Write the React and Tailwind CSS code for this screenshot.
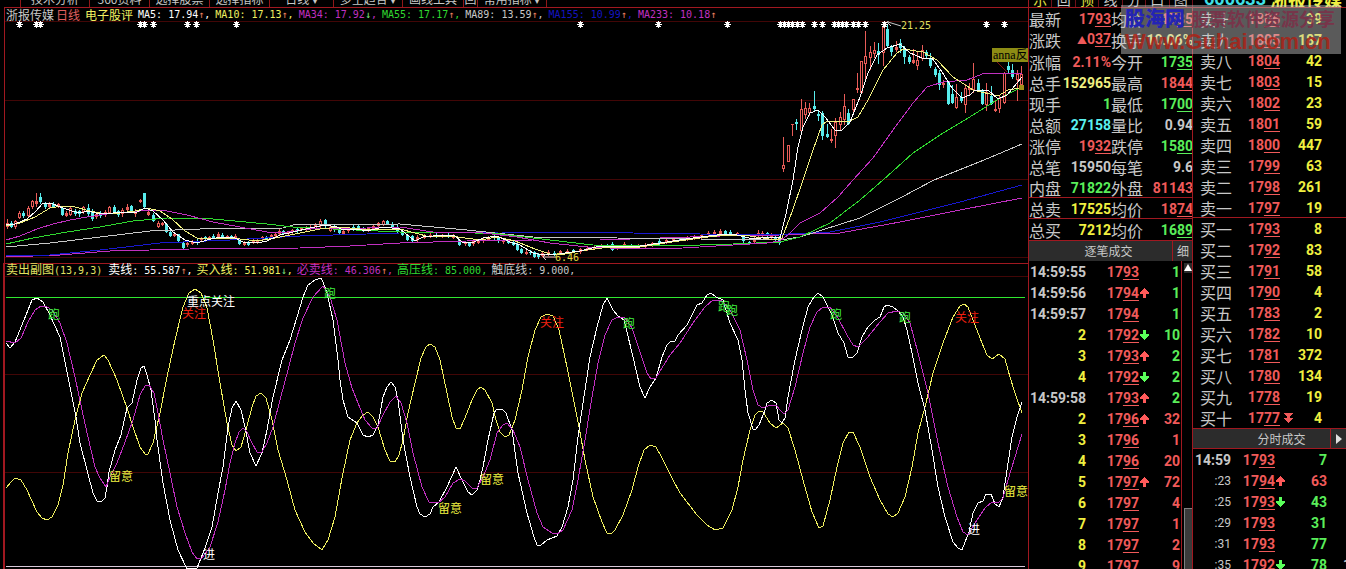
import clsx from 'clsx';

const CJK = "font-['Noto_Sans_CJK_SC',sans-serif]";
const MONO = "font-['DejaVu_Sans_Mono','Noto_Sans_CJK_SC',monospace]";
const NUM = "font-['Roboto','Noto_Sans_CJK_SC',sans-serif]";

const RED = 'text-[#f05a5a]';
const GREEN = 'text-[#5aee5a]';
const YELLOW = 'text-[#f0f040]';
const GRAY = 'text-[#c8c8c8]';
const CYAN = 'text-[#5af0f0]';

const MENU = [
  { label: '', width: 'w-[21px]' },
  { label: '技术分析', width: 'w-[69px]' },
  { label: '360资料', width: 'w-[60px]' },
  { label: '选择股票', width: 'w-[60px]' },
  { label: '选择指标', width: 'w-[60px]' },
  { label: '日线 ▾', width: 'w-[64px]' },
  { label: '多空趋合 ▾', width: 'w-[69px]' },
  { label: '画线工具', width: 'w-[61px]' },
  { label: '回', width: 'w-[14px]' },
  { label: '常用指标 ▾', width: 'w-[69px]' },
];

const VIEW_TABS = ['示', '回', '预', '线', '分', '口', '图'];

const MA_LEGEND = [
  { label: 'MA5', value: '17.94', dir: 'up', color: 'text-white' },
  { label: 'MA10', value: '17.13', dir: 'up', color: 'text-[#f0f060]' },
  { label: 'MA34', value: '17.92', dir: 'down', color: 'text-[#c030c0]' },
  { label: 'MA55', value: '17.17', dir: 'up', color: 'text-[#30d830]' },
  { label: 'MA89', value: '13.59', dir: 'up', color: 'text-[#c8c8c8]' },
  { label: 'MA155', value: '10.99', dir: 'up', color: 'text-[#1414c0]' },
  { label: 'MA233', value: '10.18', dir: 'up', color: 'text-[#c030c0]', last: true },
];

const SUB_LEGEND = [
  { label: '卖线', value: '55.587', dir: 'up', color: 'text-white' },
  { label: '买入线', value: '51.981', dir: 'down', color: 'text-[#f0f060]' },
  { label: '必卖线', value: '46.306', dir: 'up', color: 'text-[#c030c0]' },
  { label: '高压线', value: '85.000', color: 'text-[#30d830]' },
  { label: '触底线', value: '9.000', color: 'text-[#c8c8c8]' },
];

const MA_LINES = [
  { name: 'MA233', color: '#c030c0', points: '6,257 60,255 110,251 190,249 300,248 350,246 400,243 467,241 533,240 600,240 660,238 720,236 780,235 840,233 900,222 960,210 1022,198' },
  { name: 'MA155', color: '#1818d0', points: '6,256 50,255 100,250 160,243 230,240 300,236 400,233 500,232 633,233 767,235 830,232 880,222 920,212 960,202 1022,185' },
  { name: 'MA89', color: '#c8c8c8', points: '6,247 50,243 100,237 150,231 200,229 283,228 293,225 400,224 467,230 533,237 617,238 700,239 780,240 800,237 860,218 900,198 934,180 984,160 1022,144' },
  { name: 'MA55', color: '#30d830', points: '6,244 33,238 67,232 100,227 133,221 167,218 213,219 267,224 293,227 333,229 400,232 450,232 500,234 550,240 593,245 667,246 733,244 780,242 800,237 830,223 860,200 883,180 913,153 940,135 973,115 1000,98 1022,87' },
  { name: 'MA34', color: '#c030c0', points: '6,240 20,236 37,229 53,224 70,220 87,217 107,214 133,212 147,210 167,211 187,215 213,222 240,227 267,232 287,232 310,229 367,228 400,227 433,232 483,233 517,237 550,243 587,247 633,249 683,248 733,245 767,243 780,241 788,235 800,223 820,213 838,197 853,180 873,158 893,130 913,103 927,87 943,82 967,80 985,73 1007,73 1022,74' },
  { name: 'MA10', color: '#f0f080', points: '6,226 20,223 35,217 50,208 62,206 75,207 90,211 100,213 120,213 135,211 147,208 160,211 172,219 185,231 197,238 210,239 225,238 240,239 257,241 275,238 295,234 320,229 340,227 360,229 385,230 400,229 415,233 430,237 450,236 465,238 480,240 497,237 515,241 535,249 550,254 565,254 580,251 610,247 640,247 665,243 700,238 725,235 750,236 775,240 782,238 792,212 803,180 812,153 822,125 827,121 850,121 858,117 868,100 883,70 897,53 903,49 923,52 937,60 953,77 973,90 998,96 1008,90 1020,88' },
  { name: 'MA5', color: '#ffffff', points: '6,225 15,224 27,219 35,212 43,203 53,204 63,208 72,211 80,213 88,211 100,214 113,213 127,212 137,212 145,208 153,211 163,220 173,232 185,240 197,243 207,240 220,237 233,237 243,242 257,243 267,241 280,235 293,232 310,228 325,225 337,227 343,230 357,229 367,231 383,227 400,229 415,241 423,237 443,235 455,236 462,242 472,243 483,238 497,236 510,242 520,245 533,253 543,255 557,254 580,251 600,246 633,247 667,242 693,238 717,235 733,234 753,239 770,237 780,238 786,214 793,180 798,147 803,127 810,113 818,110 825,117 835,130 842,130 850,122 860,97 868,73 877,55 887,48 900,44 910,53 922,58 932,58 942,72 952,88 962,98 970,95 975,90 988,90 998,99 1007,95 1022,77' },
];

// [x, high, top, bottom, low, rising]
const CANDLES = [
  [7, 219, 223, 227, 229, 1], [11, 221, 223, 227, 228, 0], [15, 220, 221, 227, 229, 1], [19, 211, 213, 218, 219, 1],
  [23, 211, 213, 216, 218, 0], [28, 206, 208, 216, 218, 1], [32, 200, 201, 207, 209, 1], [36, 193, 201, 204, 207, 1],
  [40, 193, 197, 202, 204, 0], [45, 202, 204, 207, 209, 0], [49, 202, 204, 207, 208, 1], [53, 202, 204, 207, 208, 0],
  [58, 203, 204, 207, 208, 1], [62, 206, 208, 215, 216, 0], [66, 211, 213, 216, 217, 1], [70, 207, 208, 215, 216, 1],
  [75, 209, 211, 214, 216, 0], [79, 210, 211, 214, 217, 0], [83, 206, 207, 212, 214, 1], [88, 204, 208, 214, 216, 0],
  [92, 209, 211, 219, 221, 0], [96, 213, 214, 217, 219, 1], [100, 211, 213, 216, 218, 0], [105, 210, 212, 215, 217, 1],
  [109, 206, 207, 213, 214, 1], [114, 205, 207, 212, 213, 0], [118, 210, 211, 215, 217, 0], [122, 208, 210, 214, 217, 1],
  [127, 204, 207, 210, 213, 1], [131, 205, 206, 211, 212, 0], [135, 209, 211, 214, 217, 1], [140, 199, 200, 202, 203, 1],
  [144, 193, 193, 207, 208, 0], [148, 211, 212, 215, 216, 1], [153, 213, 215, 221, 222, 0], [158, 221, 223, 227, 228, 1],
  [162, 222, 223, 225, 226, 1], [166, 223, 224, 232, 233, 0], [170, 231, 232, 236, 237, 0], [174, 233, 234, 236, 237, 1],
  [178, 234, 234, 241, 242, 0], [183, 242, 243, 248, 249, 0], [187, 242, 243, 245, 247, 1], [192, 240, 242, 244, 245, 1],
  [197, 239, 241, 243, 245, 0], [201, 237, 238, 240, 242, 1], [205, 236, 237, 239, 240, 0], [209, 236, 237, 238, 240, 1],
  [213, 234, 236, 238, 239, 0], [218, 232, 234, 237, 238, 1], [222, 233, 235, 237, 238, 0], [227, 235, 236, 238, 239, 1],
  [231, 235, 236, 238, 239, 0], [235, 234, 236, 238, 239, 1], [239, 239, 240, 244, 245, 0], [244, 241, 242, 245, 246, 1],
  [248, 241, 242, 245, 246, 0], [253, 239, 241, 243, 244, 1], [257, 239, 241, 243, 244, 1], [262, 236, 237, 239, 241, 1],
  [266, 236, 237, 239, 240, 0], [271, 234, 235, 237, 239, 1], [275, 233, 234, 236, 238, 1], [279, 229, 231, 234, 236, 1],
  [283, 230, 231, 234, 235, 0], [288, 231, 232, 234, 235, 1], [292, 229, 230, 232, 234, 1], [297, 228, 229, 231, 233, 0],
  [301, 227, 228, 230, 231, 1], [306, 226, 228, 230, 231, 1], [310, 225, 227, 229, 231, 1], [315, 223, 225, 229, 230, 1],
  [320, 219, 221, 226, 228, 1], [325, 219, 220, 226, 228, 0], [330, 225, 227, 231, 232, 1], [334, 225, 227, 230, 232, 0],
  [339, 228, 230, 233, 234, 0], [343, 229, 231, 234, 235, 1], [348, 227, 228, 231, 233, 1], [353, 225, 227, 229, 231, 0],
  [358, 225, 226, 229, 230, 0], [363, 227, 229, 231, 232, 0], [368, 227, 228, 231, 232, 1], [373, 224, 226, 229, 230, 1],
  [378, 222, 223, 226, 228, 1], [383, 220, 221, 225, 226, 1], [387, 220, 221, 224, 225, 0], [392, 222, 224, 227, 228, 0],
  [397, 225, 227, 231, 233, 0], [402, 230, 231, 235, 236, 0], [407, 234, 235, 240, 241, 0], [412, 235, 236, 241, 242, 0],
  [417, 235, 237, 240, 242, 1], [424, 234, 236, 238, 239, 1], [430, 233, 235, 237, 238, 1], [436, 233, 235, 237, 238, 0],
  [442, 234, 235, 237, 238, 1], [448, 233, 235, 236, 238, 0], [453, 234, 236, 238, 239, 1], [459, 239, 240, 245, 246, 0],
  [465, 241, 242, 244, 246, 1], [469, 242, 243, 246, 247, 0], [473, 239, 241, 244, 246, 1], [478, 240, 241, 243, 244, 1],
  [483, 238, 239, 241, 243, 1], [488, 236, 237, 240, 241, 1], [494, 235, 236, 238, 240, 0], [498, 236, 237, 241, 243, 0],
  [503, 239, 240, 242, 244, 1], [508, 240, 241, 243, 244, 0], [513, 241, 242, 245, 246, 0], [517, 243, 244, 250, 251, 0],
  [521, 248, 249, 253, 254, 0], [526, 250, 252, 254, 255, 1], [530, 250, 252, 253, 255, 0], [534, 251, 252, 257, 258, 0],
  [538, 253, 254, 257, 259, 0], [542, 251, 253, 256, 257, 1], [548, 250, 252, 254, 256, 1], [554, 251, 253, 255, 256, 0],
  [560, 250, 251, 253, 255, 1], [567, 249, 251, 253, 254, 1], [573, 249, 250, 252, 253, 0], [580, 248, 249, 252, 254, 1],
  [587, 246, 248, 250, 251, 1], [594, 245, 247, 249, 250, 1], [601, 244, 246, 248, 249, 1], [607, 244, 245, 247, 248, 0],
  [612, 242, 244, 250, 251, 0], [617, 245, 247, 249, 250, 1], [624, 242, 244, 247, 248, 1], [631, 244, 245, 247, 248, 0],
  [638, 244, 246, 248, 249, 1], [645, 243, 245, 247, 249, 1], [652, 242, 243, 245, 247, 1], [659, 239, 241, 244, 245, 0],
  [666, 239, 240, 242, 244, 1], [673, 237, 239, 241, 242, 1], [680, 237, 238, 240, 241, 0], [687, 236, 237, 239, 241, 1],
  [694, 235, 236, 238, 240, 1], [701, 234, 235, 237, 239, 1], [708, 231, 233, 235, 237, 1], [714, 230, 232, 235, 236, 1],
  [720, 229, 231, 234, 236, 1], [725, 230, 231, 234, 235, 0], [730, 230, 232, 235, 236, 0], [737, 232, 233, 235, 236, 1],
  [743, 235, 237, 241, 243, 0], [749, 241, 242, 244, 245, 0], [754, 237, 239, 242, 243, 1], [758, 230, 233, 236, 238, 1],
  [762, 231, 233, 235, 237, 1], [767, 232, 233, 236, 238, 0], [771, 233, 234, 237, 239, 1], [775, 235, 237, 240, 241, 0],
  [779, 236, 238, 243, 245, 0], [783, 137, 165, 169, 172, 1], [788, 145, 145, 162, 162, 1], [792, 124, 124, 125, 136, 1],
  [796, 119, 122, 124, 130, 0], [801, 99, 109, 131, 132, 1], [805, 102, 108, 115, 119, 1], [809, 103, 108, 113, 116, 1],
  [814, 91, 106, 109, 111, 0], [818, 111, 114, 116, 121, 0], [822, 111, 113, 136, 140, 0], [827, 124, 134, 137, 138, 0],
  [831, 129, 139, 141, 143, 1], [835, 118, 122, 136, 148, 1], [840, 112, 117, 125, 130, 1], [844, 94, 106, 120, 125, 1],
  [848, 109, 113, 124, 125, 0], [853, 99, 99, 110, 112, 1], [857, 73, 88, 90, 93, 1], [861, 61, 61, 93, 94, 1],
  [865, 31, 56, 64, 82, 1], [870, 46, 52, 58, 70, 1], [874, 42, 50, 54, 58, 1], [878, 43, 51, 55, 64, 0],
  [883, 25, 27, 53, 66, 1], [887, 24, 29, 46, 48, 0], [891, 45, 47, 52, 56, 0], [896, 41, 47, 50, 52, 1],
  [900, 39, 43, 48, 53, 0], [904, 46, 48, 57, 64, 0], [909, 55, 57, 62, 64, 0], [913, 49, 60, 63, 64, 1],
  [917, 52, 60, 66, 70, 1], [922, 45, 50, 59, 61, 1], [926, 50, 52, 56, 58, 0], [930, 53, 58, 66, 68, 0],
  [935, 67, 69, 75, 77, 0], [939, 70, 73, 85, 90, 0], [943, 80, 83, 85, 88, 1], [948, 82, 82, 104, 105, 0],
  [952, 85, 94, 103, 104, 0], [956, 84, 97, 108, 109, 1], [961, 92, 97, 101, 103, 0], [965, 84, 88, 105, 113, 1],
  [969, 83, 88, 90, 96, 1], [973, 63, 79, 90, 93, 1], [978, 79, 83, 91, 92, 0], [982, 89, 90, 104, 105, 0],
  [986, 83, 92, 105, 111, 1], [991, 86, 96, 104, 105, 0], [995, 101, 109, 111, 112, 1], [999, 95, 98, 109, 113, 1],
  [1004, 72, 73, 103, 104, 1], [1008, 62, 66, 70, 73, 0], [1012, 64, 70, 77, 79, 0], [1017, 70, 74, 80, 101, 1],
  [1021, 66, 74, 85, 88, 1],
];

const STARS = [
  19, 36, 40, 140, 144, 153, 187, 196, 236, 580, 658, 727, 780, 784, 788, 792, 797, 802,
  814, 822, 834, 838, 842, 846, 853, 858, 865, 884, 986, 1004,
];

const SUB_LINES = [
  { name: 'buy', color: '#f0f060', points: '6,488 12,481 15,478 21,480 27,490 37,512 42,518 47,520 52,517 58,505 63,485 68,453 75,420 82,393 90,375 97,360 104,355 108,360 117,380 127,408 133,427 140,447 145,454 148,454 153,443 160,413 167,377 175,340 183,307 189,293 195,289 201,293 207,308 213,340 220,383 227,423 232,445 236,451 241,447 246,430 252,407 256,396 261,393 266,398 272,420 278,450 287,480 295,510 305,532 313,543 322,550 328,540 335,517 342,478 350,440 357,423 363,415 368,412 373,417 378,427 385,450 390,461 395,462 399,455 403,440 408,413 415,383 421,358 426,347 430,344 435,347 440,360 447,393 452,417 456,428 460,429 465,418 472,400 477,390 481,387 485,390 492,403 496,420 500,432 505,437 509,435 515,420 522,390 528,357 535,330 541,317 547,314 553,316 559,330 567,367 573,397 579,427 585,460 593,497 602,522 607,533 611,534 615,530 623,515 632,490 638,467 644,450 650,445 656,447 662,458 673,480 680,493 697,515 707,525 715,530 723,528 732,510 738,487 743,460 750,430 755,415 759,411 763,412 770,423 776,428 783,423 788,428 795,450 803,480 812,512 819,528 823,526 830,500 837,467 843,443 849,432 853,432 860,447 870,477 880,500 888,514 893,517 898,513 905,497 912,467 918,433 925,407 933,373 943,343 953,317 960,306 964,304 968,307 975,325 982,343 987,355 992,359 999,354 1005,359 1010,377 1015,393 1022,413' },
  { name: 'sell', color: '#ffffff', points: '6,343 10,348 15,342 24,320 32,300 37,298 43,302 50,315 60,337 68,377 76,417 80,443 87,470 93,493 97,501 101,502 105,498 107,487 109,472 115,450 121,435 127,408 132,403 137,380 141,368 144,366 147,375 151,390 155,420 157,440 163,483 170,520 178,550 187,569 197,568 205,548 212,527 218,493 223,467 228,427 232,408 236,401 241,410 245,427 250,453 256,466 262,453 267,430 273,397 282,360 290,340 297,317 303,297 308,285 315,280 321,278 323,282 327,293 333,320 338,360 340,380 343,400 348,417 357,423 363,435 368,437 373,435 378,425 383,397 387,387 391,382 395,387 398,400 403,440 410,477 417,507 420,514 425,517 430,514 433,507 439,502 447,487 456,467 463,482 468,492 472,495 477,490 480,480 483,467 488,440 494,413 496,410 502,409 506,413 512,430 518,473 527,513 534,537 537,545 541,545 547,540 557,536 562,527 568,507 573,480 578,437 583,403 590,357 597,327 603,305 607,298 613,310 618,316 624,320 627,332 633,357 640,387 645,398 650,387 656,378 662,357 667,345 671,341 675,341 678,335 687,325 697,305 702,303 707,295 711,293 716,297 723,300 730,323 738,340 742,360 745,390 748,413 753,429 755,430 759,425 765,410 767,403 772,400 776,403 779,420 782,423 785,418 788,397 795,360 802,330 808,307 814,297 818,293 823,297 827,305 832,315 838,333 844,343 848,357 853,357 857,353 862,337 868,327 875,320 880,317 884,307 887,305 893,307 898,311 903,317 907,330 912,353 918,383 925,410 932,450 938,487 945,517 953,542 958,548 962,550 965,542 969,532 973,513 978,503 983,501 986,494 991,494 995,504 999,507 1003,497 1007,470 1012,437 1017,417 1022,402' },
  { name: 'mustSell', color: '#c030c0', points: '6,341 15,343 21,338 28,322 35,310 41,306 47,307 52,310 60,323 67,343 75,377 82,410 88,437 95,467 100,478 106,487 110,477 117,463 125,442 133,420 140,395 145,386 149,385 154,393 158,413 163,440 170,473 177,507 185,533 192,552 197,559 202,558 210,547 218,522 225,490 230,463 235,443 239,432 243,428 247,432 252,443 257,452 262,452 267,443 273,427 280,400 288,370 295,343 303,318 313,297 323,286 330,297 337,320 345,363 352,388 358,403 365,420 372,428 377,428 383,415 390,402 396,396 401,403 407,423 413,453 422,487 429,502 438,503 445,497 453,483 460,479 465,481 472,488 477,488 483,477 490,460 497,433 503,425 507,423 513,430 520,447 528,480 537,513 543,527 552,533 557,534 563,530 572,510 578,480 585,440 592,397 598,363 605,335 612,320 618,317 625,318 632,328 640,352 647,373 651,379 656,378 662,368 670,355 680,343 693,323 705,307 713,300 722,301 730,310 740,330 747,360 753,390 758,405 763,408 770,405 776,405 780,410 784,414 788,410 795,387 803,353 810,327 817,312 823,307 830,307 838,318 847,335 853,345 858,347 867,338 880,322 888,313 897,311 903,313 910,323 918,353 928,393 938,443 948,487 957,517 963,532 968,535 977,520 985,508 992,502 998,503 1003,498 1008,480 1015,457 1022,434' },
];

const SIGNALS = [
  { x: 48, y: 319, text: '跑', fill: '#40f040' },
  { x: 324, y: 298, text: '跑', fill: '#40f040' },
  { x: 623, y: 328, text: '跑', fill: '#40f040' },
  { x: 718, y: 311, text: '跑', fill: '#40f040' },
  { x: 726, y: 315, text: '跑', fill: '#40f040' },
  { x: 830, y: 319, text: '跑', fill: '#40f040' },
  { x: 899, y: 322, text: '跑', fill: '#40f040' },
  { x: 182, y: 318, text: '关注', fill: '#f02010' },
  { x: 540, y: 327, text: '关注', fill: '#f02010' },
  { x: 955, y: 322, text: '关注', fill: '#f02010' },
  { x: 187, y: 306, text: '重点关注', fill: '#ffffff' },
  { x: 109, y: 481, text: '留意', fill: '#f0f040' },
  { x: 438, y: 513, text: '留意', fill: '#f0f040' },
  { x: 480, y: 484, text: '留意', fill: '#f0f040' },
  { x: 1004, y: 496, text: '留意', fill: '#f0f040' },
  { x: 203, y: 559, text: '进', fill: '#ffffff' },
  { x: 968, y: 534, text: '进', fill: '#ffffff' },
];

// [label, value, color, label, value, color, price underline left/right]
const QUOTE = [
  ['最新', '1793', RED, '均价', '1785', RED, true, true],
  ['涨跌', '037', RED, '换手', '10.06%', 'text-[#f0f080]', true, false],
  ['涨幅', '2.11%', RED, '今开', '1735', GREEN, false, true],
  ['总手', '152965', 'text-[#f0f080]', '最高', '1844', RED, false, true],
  ['现手', '1', GREEN, '最低', '1700', GREEN, false, true],
  ['总额', '27158', CYAN, '量比', '0.94', GRAY, false, false],
  ['涨停', '1932', RED, '跌停', '1580', GREEN, true, true],
  ['总笔', '15950', GRAY, '每笔', '9.6', GRAY, false, false],
  ['内盘', '71822', GREEN, '外盘', '81143', RED, false, false],
  ['总卖', '17525', YELLOW, '均价', '1874', RED, false, true],
  ['总买', '7212', YELLOW, '均价', '1689', GREEN, false, true],
];

const TICKS = [
  ['14:59:55', '1793', '', '1', GREEN],
  ['14:59:56', '1794', 'up', '1', GREEN],
  ['14:59:57', '1794', '', '1', GREEN],
  ['2', '1792', 'down', '10', GREEN],
  ['3', '1793', 'up', '2', GREEN],
  ['4', '1792', 'down', '2', GREEN],
  ['14:59:58', '1793', 'up', '2', GREEN],
  ['2', '1796', 'up', '32', RED],
  ['3', '1796', '', '1', RED],
  ['4', '1796', '', '20', RED],
  ['5', '1797', 'up', '72', RED],
  ['6', '1797', '', '4', RED],
  ['7', '1797', '', '1', RED],
  ['8', '1797', '', '2', RED],
  ['9', '1797', '', '9', RED],
];

const DEPTH = [
  ['卖十', '1806', '39'], ['卖九', '1805', '187'], ['卖八', '1804', '42'], ['卖七', '1803', '15'], ['卖六', '1802', '23'],
  ['卖五', '1801', '59'], ['卖四', '1800', '447'], ['卖三', '1799', '63'], ['卖二', '1798', '261'], ['卖一', '1797', '19'],
  ['买一', '1793', '8'], ['买二', '1792', '83'], ['买三', '1791', '58'], ['买四', '1790', '4'], ['买五', '1783', '2'],
  ['买六', '1782', '10'], ['买七', '1781', '372'], ['买八', '1780', '134'], ['买九', '1778', '19'], ['买十', '1777', '4'],
];

const MINUTES = [
  ['14:59', '1793', '', '7', GREEN, ''],
  [':23', '1794', 'up', '63', RED, ''],
  [':25', '1793', 'down', '43', GREEN, ''],
  [':29', '1793', '', '31', GREEN, ''],
  [':31', '1793', '', '77', GREEN, ''],
  [':35', '1792', 'down', '78', GREEN, '1'],
];

function Price({ value }) {
  return (
    <>
      {value.slice(0, -2)}
      <span className="underline decoration-1 underline-offset-2">{value.slice(-2)}</span>
    </>
  );
}

function Arrow({ dir }) {
  if (!dir) return null;
  return (
    <svg viewBox="0 0 9 10" className="block w-[9px] h-[10px]" shapeRendering="crispEdges" aria-hidden="true">
      {dir === 'up' && <path d="M4 0h1v1h1v1h1v1h1v1h1v2H6v4H3V6H0V4h1V3h1V2h1V1h1z" fill="#ff5a5a" />}
      {dir === 'down' && <path d="M4 10h1V9h1V8h1V7h1V6h1V4H6V0H3v4H0v2h1v1h1v1h1v1h1z" fill="#5aff5a" />}
      {dir === 'fall' && <path d="M0 0h9v1H8v1H7v1H6v2h3v1H8v1H7v1H6v1H5v1H4V9H3V8H2V7H1V6H0V5h3V3H2V2H1V1H0z" fill="#f05a5a" />}
    </svg>
  );
}

function Legend({ items }) {
  return items.map((item) => (
    <span key={item.label} className={clsx('whitespace-nowrap', item.color)}>
      <span className={item.label.startsWith('MA') ? MONO : clsx(CJK, 'text-xs leading-3')}>{item.label}</span>
      : {item.value}
      {item.dir && <span className={item.dir === 'up' ? 'text-[#f08060]' : 'text-[#80f080]'}>{item.dir === 'up' ? '↑' : '↓'}</span>}
      {!item.last && ','}
    </span>
  ));
}

function MainChart() {
  return (
    <svg viewBox="5 21 1023 242" className="block w-full h-auto" role="img" aria-label="日线K线图">
      <g fill="#420606" shapeRendering="crispEdges">
        {[21, 100, 179, 257].map((y) => <rect key={y} x="5" y={y} width="1023" height="1" />)}
      </g>
      <g shapeRendering="crispEdges">
        {CANDLES.map(([x, high, top, bottom, low, rising]) => {
          const color = rising ? '#e85c58' : '#58ecec';
          return (
            <g key={x}>
              <rect x={x} y={high} width="1" height={Math.max(low - high, 1)} fill={color} />
              <rect x={x - 1} y={top} width="3" height={Math.max(bottom - top, 1)} fill={color} />
              {rising === 1 && bottom - top > 3 && <rect x={x} y={top + 1} width="1" height={bottom - top - 2} fill="#000" />}
            </g>
          );
        })}
      </g>
      <g shapeRendering="crispEdges" fill="none" strokeWidth="1">
        {MA_LINES.map((line) => <polyline key={line.name} points={line.points} stroke={line.color} />)}
      </g>
      <g fill="#fff" shapeRendering="crispEdges">
        {STARS.map((x) => (
          <path key={x} d={`M${x} 20h1v1h2v1h-1v1h2v1h-2v1h1v1h-2v1h-1v-1h-2v-1h1v-1h-2v-1h2v-1h-1v-1h2z`} transform="translate(0 1)" />
        ))}
      </g>
      <path d="M901 26 888 22M892 19l-5 3 4 4" stroke="#c8c8c8" fill="none" />
      <text x="901" y="29" fill="#e0e060" className={clsx(MONO, 'text-[10px]')}>21.25</text>
      <path d="M556 257H543M546 254l-3 3 3 3" stroke="#e8c8c8" fill="none" />
      <text x="555" y="261" fill="#e0d840" className={clsx(MONO, 'text-[10px]')}>6.46</text>
      <path d="M997 62 1007 72" stroke="#801010" />
      <rect x="992" y="48" width="36" height="14" fill="#8c8c14" />
      <text x="993" y="59" fill="#000" className="text-[12px] font-['Liberation_Serif','Noto_Sans_CJK_SC',serif]">anna反</text>
      <rect x="1019" y="85" width="5" height="5" fill="#a09018" />
    </svg>
  );
}

function SubChart() {
  return (
    <svg viewBox="5 276 1023 293" className="block w-full h-auto" role="img" aria-label="卖出副图">
      <g shapeRendering="crispEdges">
        {[276, 374, 472].map((y) => <rect key={y} x="5" y={y} width="1023" height="1" fill="#420606" />)}
        <rect x="6" y="297" width="1019" height="1" fill="#30e830" />
        <rect x="6" y="566" width="1019" height="1" fill="#d8c8d8" />
        {SUB_LINES.map((line) => <polyline key={line.name} points={line.points} stroke={line.color} fill="none" />)}
      </g>
      {SIGNALS.map((s) => (
        <text key={`${s.x}-${s.y}`} x={s.x} y={s.y} fill={s.fill} className={clsx(CJK, 'text-xs')}>{s.text}</text>
      ))}
    </svg>
  );
}

function QuoteTable() {
  return (
    <table className="w-full table-fixed border-collapse text-right">
      <colgroup>
        <col className="w-8" /><col /><col className="w-8" /><col />
      </colgroup>
      <tbody>
        {QUOTE.map(([l1, v1, c1, l2, v2, c2, u1, u2], i) => (
          <tr key={l1} className={clsx('h-[21px]', i > 8 && 'shadow-[0_-1px_0_#a01820]')}>
            <th className={clsx(CJK, 'p-0 text-left text-base leading-5 font-normal whitespace-nowrap', GRAY)}>{l1}</th>
            <td className={clsx('p-0 whitespace-nowrap', c1)}>
              {l1 === '涨跌' && <span className="text-[10px]">▲</span>}
              {u1 ? <Price value={v1} /> : v1}
            </td>
            <th className={clsx(CJK, 'p-0 text-left text-base leading-5 font-normal whitespace-nowrap', GRAY)}>{l2}</th>
            <td className={clsx('p-0 whitespace-nowrap', c2)}>{u2 ? <Price value={v2} /> : v2}</td>
          </tr>
        ))}
      </tbody>
    </table>
  );
}

function TickTable() {
  return (
    <table className="flex-1 table-fixed border-collapse text-right">
      <colgroup>
        <col className="w-[57px]" /><col className="w-[53px]" /><col className="w-[11px]" /><col />
      </colgroup>
      <tbody>
        {TICKS.map(([time, price, dir, qty, color], i) => (
          <tr key={i} className="h-[21px]">
            <td className={clsx('p-0', time.includes(':') ? GRAY : YELLOW)}>{time}</td>
            <td className={clsx('p-0', RED)}><Price value={price} /></td>
            <td className="p-0 pl-px"><Arrow dir={dir} /></td>
            <td className={clsx('p-0 pr-px', color)}>{qty}</td>
          </tr>
        ))}
      </tbody>
    </table>
  );
}

function DepthTable() {
  return (
    <table className="w-full table-fixed border-collapse text-right">
      <colgroup>
        <col className="w-10" /><col className="w-[47px]" /><col className="w-4" /><col />
      </colgroup>
      <tbody>
        {DEPTH.map(([label, price, qty]) => (
          <tr key={label} className={clsx('h-[21px]', label === '买一' && 'shadow-[0_-1px_0_#a01820]')}>
            <th className={clsx(CJK, 'p-0 pl-[7px] text-left text-base leading-5 font-normal whitespace-nowrap', GRAY)}>{label}</th>
            <td className={clsx('p-0', RED)}><Price value={price} /></td>
            <td className="p-0 pl-1">{label === '买十' && <Arrow dir="fall" />}</td>
            <td className={clsx('p-0 pr-6', YELLOW)}>{qty}</td>
          </tr>
        ))}
      </tbody>
    </table>
  );
}

function MinuteTable() {
  return (
    <table className="w-full table-fixed border-collapse text-right">
      <colgroup>
        <col className="w-[38px]" /><col className="w-11" /><col className="w-[11px]" /><col /><col className="w-[19px]" />
      </colgroup>
      <tbody>
        {MINUTES.map(([time, price, dir, qty, color, count]) => (
          <tr key={time} className="h-[21px]">
            <td className={clsx('p-0', GRAY, time.startsWith(':') && 'text-xs font-normal')}>{time}</td>
            <td className={clsx('p-0', RED)}><Price value={price} /></td>
            <td className="p-0 pl-px"><Arrow dir={dir} /></td>
            <td className={clsx('p-0', color)}>{qty}</td>
            <td className={clsx('p-0 pl-4 text-left', GRAY)}>{count}</td>
          </tr>
        ))}
      </tbody>
    </table>
  );
}

function Watermark() {
  return (
    <div className="absolute top-[5px] right-[5px] w-[220px] h-[49px] bg-[#c8c8c8]/45 overflow-hidden whitespace-nowrap">
      <div className={clsx(CJK, 'flex items-center justify-between h-[26px] pl-1 pr-1.5')}>
        <span className="text-xl leading-6 font-black text-[#2424b4]">股海网</span>
        <span className="text-lg leading-6 font-bold text-[#7c3048]/90">股票软件资源分享</span>
      </div>
      <div className="pl-1 text-[22px] leading-[22px] font-black text-[#a82418]/90 font-['Liberation_Sans',sans-serif]">
        Www.Guhai.com.cn
      </div>
    </div>
  );
}

export default function App() {
  return (
    <div className="relative flex h-screen overflow-hidden bg-black">
      {/* Charts */}
      <main className="flex-1 min-w-0">
        <nav className={clsx(CJK, 'flex h-[7px] items-end overflow-hidden text-xs text-[#c8c8c8]')}>
          {MENU.map((item, i) => (
            <button key={i} type="button" className={clsx('shrink-0 h-4 leading-4 border-r border-[#901818] whitespace-nowrap', item.width)}>{item.label}</button>
          ))}
        </nav>
        <section className="ml-1 border-l border-t border-[#a01820]">
          <div className={clsx(MONO, 'flex items-center gap-[5px] h-[13px] pl-px text-[10px] leading-3')}>
            <span className={clsx(CJK, 'text-xs leading-3 text-[#c8c8c8]')}>浙报传媒<span className="pl-0.5 text-[#e06060]">日线</span></span>
            <span className={clsx(CJK, 'text-xs leading-3 text-[#f0f060]')}>电子股评</span>
            <Legend items={MA_LEGEND} />
          </div>
          <MainChart />
        </section>
        <section className="ml-[3px] border-l-2 border-t border-[#a01820]">
          <div className={clsx(MONO, 'flex items-center gap-1 h-3 pl-px text-[10px] leading-3')}>
            <span className="pr-0.5 whitespace-nowrap text-[#e0e060]"><span className={clsx(CJK, 'text-xs leading-3')}>卖出副图</span>(13,9,3)</span>
            <Legend items={SUB_LEGEND} />
          </div>
          <SubChart />
        </section>
      </main>

      {/* Quote and tick list */}
      <aside className={clsx(NUM, 'w-[165px] shrink-0 border-l border-[#a01820] text-sm leading-5 font-bold')}>
        <div className={clsx(CJK, 'flex h-2 items-end overflow-hidden border-b border-[#a01820] text-sm font-normal')}>
          {VIEW_TABS.map((tab, i) => (
            <button key={tab} type="button" className={clsx('flex-1 shrink-0 h-4 leading-4 border-r border-[#701018]', i % 2 === 0 && i < 4 ? 'text-[#e0e040]' : 'text-[#c8c8c8]')}>{tab}</button>
          ))}
        </div>
        <QuoteTable />
        <div className={clsx(CJK, 'flex h-[21px] border-t border-[#a01820] bg-[#2c2c2c] text-xs leading-5 font-normal text-[#c8c8c8]')}>
          <h2 className="flex-1 pl-4 text-center">逐笔成交</h2>
          <button type="button" className="w-[21px] border-l border-[#a01820]">细</button>
        </div>
        <div className="flex">
          <TickTable />
          <div className="flex w-3 flex-col items-center justify-between border-l border-[#a01820]">
            <svg viewBox="0 0 8 10" className="mt-0.5 w-2 h-2.5" aria-hidden="true">
              <rect width="8" height="10" fill="#2c2c2c" />
              <path d="M4 1 8 8H0z" fill="#fff" />
            </svg>
            <div className="w-2 h-[68px] border-l border-t border-[#808080] bg-[#3a3a3a]" />
          </div>
        </div>
      </aside>

      {/* Order book */}
      <aside className={clsx(NUM, 'w-[153px] shrink-0 text-sm leading-5 font-bold')}>
        <div className="flex h-2 items-end gap-1 overflow-hidden border-b border-[#a01820] pl-[11px] text-[18px] whitespace-nowrap">
          <span className="h-4 text-[18px] leading-4 text-[#40e0e8]">600633</span>
          <span className={clsx(CJK, 'h-4 leading-4 text-[#f0f040]')}>浙报传媒</span>
        </div>
        <div className="border-l border-[#a01820] -ml-px">
          <DepthTable />
          <div className={clsx(CJK, 'flex h-[21px] border-t border-b border-[#a01820] bg-[#2c2c2c] text-xs leading-5 font-normal text-[#c8c8c8]')}>
            <h2 className="flex-1 pl-10 text-center">分时成交</h2>
            <button type="button" aria-label="展开" className="flex w-4 items-center justify-center border-l border-[#a01820]">
              <svg viewBox="0 0 6 10" className="w-1.5 h-2.5"><path d="M0 0 6 5 0 10z" fill="#e0e0e0" /></svg>
            </button>
          </div>
          <MinuteTable />
        </div>
      </aside>

      <Watermark />
    </div>
  );
}
